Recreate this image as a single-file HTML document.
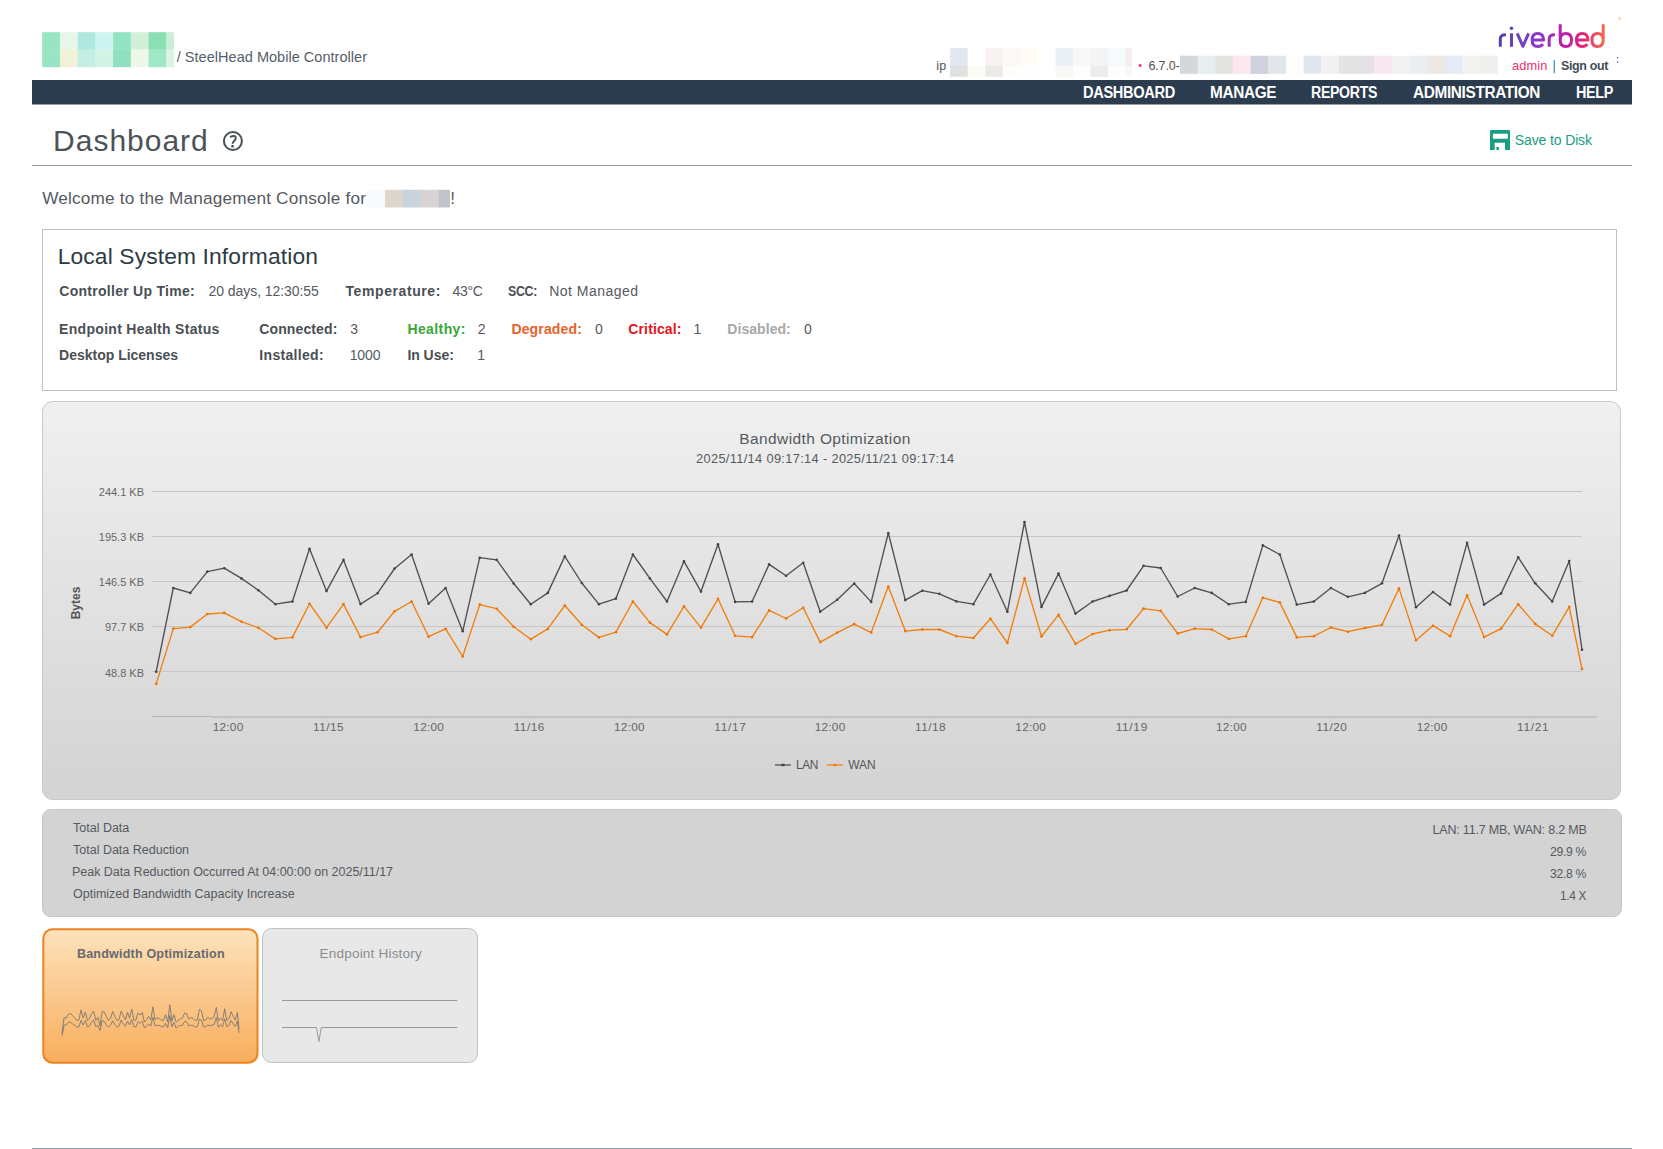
<!DOCTYPE html>
<html><head><meta charset="utf-8">
<style>
html,body{margin:0;padding:0;background:#fff;}
body{width:1663px;height:1149px;position:relative;overflow:hidden;font-family:"Liberation Sans",sans-serif;}
.t{position:absolute;white-space:nowrap;line-height:1;}
.abs{position:absolute;}
</style></head><body>
<svg class="abs" style="left:0;top:0" width="1663" height="1149" viewBox="0 0 1663 1149">
<rect x="42.20" y="32.20" width="18.02" height="17.65" fill="#98e4c4"/><rect x="59.92" y="32.20" width="18.02" height="17.65" fill="#e6f7ea"/><rect x="77.64" y="32.20" width="18.02" height="17.65" fill="#aee8de"/><rect x="95.36" y="32.20" width="18.02" height="17.65" fill="#cdf4f0"/><rect x="113.08" y="32.20" width="18.02" height="17.65" fill="#92e4c4"/><rect x="130.80" y="32.20" width="18.02" height="17.65" fill="#d2f0d8"/><rect x="148.52" y="32.20" width="18.02" height="17.65" fill="#8adfb4"/><rect x="166.24" y="32.20" width="7.76" height="17.65" fill="#c8eed8"/><rect x="42.20" y="49.55" width="18.02" height="17.65" fill="#98e4c4"/><rect x="59.92" y="49.55" width="18.02" height="17.65" fill="#f2f2d8"/><rect x="77.64" y="49.55" width="18.02" height="17.65" fill="#c2eee4"/><rect x="95.36" y="49.55" width="18.02" height="17.65" fill="#d2f4e4"/><rect x="113.08" y="49.55" width="18.02" height="17.65" fill="#8ee0c0"/><rect x="130.80" y="49.55" width="18.02" height="17.65" fill="#eef8e8"/><rect x="148.52" y="49.55" width="18.02" height="17.65" fill="#9ee8c8"/><rect x="166.24" y="49.55" width="7.76" height="17.65" fill="#daf4e0"/><rect x="165.9" y="32.2" width="8.1" height="34.7" fill="#fff" opacity="0"/><rect x="950.10" y="47.90" width="17.86" height="18.20" fill="#e2e8f0"/><rect x="967.66" y="47.90" width="17.86" height="18.20" fill="#ffffff"/><rect x="985.22" y="47.90" width="17.86" height="18.20" fill="#f8f2f0"/><rect x="1002.78" y="47.90" width="17.86" height="18.20" fill="#faf9f8"/><rect x="1020.34" y="47.90" width="17.86" height="18.20" fill="#fffbf5"/><rect x="1037.90" y="47.90" width="17.86" height="18.20" fill="#ffffff"/><rect x="1055.46" y="47.90" width="17.86" height="18.20" fill="#eaf0f5"/><rect x="1073.02" y="47.90" width="17.86" height="18.20" fill="#f8f8f8"/><rect x="1090.58" y="47.90" width="17.86" height="18.20" fill="#f6f4f3"/><rect x="1108.14" y="47.90" width="17.86" height="18.20" fill="#f6fafc"/><rect x="1125.70" y="47.90" width="6.30" height="18.20" fill="#f6eeee"/><rect x="950.10" y="65.80" width="17.86" height="11.00" fill="#e0e0df"/><rect x="967.66" y="65.80" width="17.86" height="11.00" fill="#fafcf6"/><rect x="985.22" y="65.80" width="17.86" height="11.00" fill="#eceae8"/><rect x="1002.78" y="65.80" width="17.86" height="11.00" fill="#fdfdfc"/><rect x="1020.34" y="65.80" width="17.86" height="11.00" fill="#fefefe"/><rect x="1037.90" y="65.80" width="17.86" height="11.00" fill="#ffffff"/><rect x="1055.46" y="65.80" width="17.86" height="11.00" fill="#f8f8f4"/><rect x="1073.02" y="65.80" width="17.86" height="11.00" fill="#fdfefe"/><rect x="1090.58" y="65.80" width="17.86" height="11.00" fill="#ececea"/><rect x="1108.14" y="65.80" width="17.86" height="11.00" fill="#fdfdfd"/><rect x="1125.70" y="65.80" width="6.30" height="11.00" fill="#f6faf2"/><rect x="1180.00" y="55.70" width="17.95" height="18.10" fill="#d5d8db"/><rect x="1197.65" y="55.70" width="17.95" height="18.10" fill="#e6eff0"/><rect x="1215.30" y="55.70" width="17.95" height="18.10" fill="#e4e4e2"/><rect x="1232.95" y="55.70" width="17.95" height="18.10" fill="#fde6ef"/><rect x="1250.60" y="55.70" width="17.95" height="18.10" fill="#cfd2dc"/><rect x="1268.25" y="55.70" width="17.95" height="18.10" fill="#e1e6ea"/><rect x="1285.90" y="55.70" width="17.95" height="18.10" fill="#fdfdfc"/><rect x="1303.55" y="55.70" width="17.95" height="18.10" fill="#dfe8f0"/><rect x="1321.20" y="55.70" width="17.95" height="18.10" fill="#f1f1ef"/><rect x="1338.85" y="55.70" width="17.95" height="18.10" fill="#e4e4e4"/><rect x="1356.50" y="55.70" width="17.95" height="18.10" fill="#e4e2e6"/><rect x="1374.15" y="55.70" width="17.95" height="18.10" fill="#f9e6ee"/><rect x="1391.80" y="55.70" width="17.95" height="18.10" fill="#f3f3f3"/><rect x="1409.45" y="55.70" width="17.95" height="18.10" fill="#e9eef2"/><rect x="1427.10" y="55.70" width="17.95" height="18.10" fill="#ece8e4"/><rect x="1444.75" y="55.70" width="17.95" height="18.10" fill="#e5ebf4"/><rect x="1462.40" y="55.70" width="17.95" height="18.10" fill="#f2f2ef"/><rect x="1480.05" y="55.70" width="17.65" height="18.10" fill="#efefed"/><rect x="367.30" y="189.80" width="18.10" height="17.70" fill="#f6fafd"/><rect x="385.10" y="189.80" width="18.10" height="17.70" fill="#ded6cc"/><rect x="402.90" y="189.80" width="18.10" height="17.70" fill="#c8d4dc"/><rect x="420.70" y="189.80" width="18.10" height="17.70" fill="#d8d4d4"/><rect x="438.50" y="189.80" width="11.50" height="17.70" fill="#c0c4c8"/>
<!-- pink dot -->
<rect x="1138.8" y="64.2" width="2.6" height="2.6" fill="#ec2f6c"/>
<!-- admin separator -->
<rect x="1553.6" y="60.2" width="1.3" height="13" fill="#4a90c0"/>
<!-- tiny marks -->
<circle cx="1619.6" cy="18.4" r="1" fill="none" stroke="#f4a070" stroke-width="0.7"/>
<rect x="1617" y="57" width="1.2" height="1.2" fill="#3060a0"/>
<rect x="1617" y="61.5" width="1.2" height="1.2" fill="#3060a0"/>
<!-- riverbed logo -->
<defs>
<linearGradient id="rb" x1="1497" y1="0" x2="1606" y2="0" gradientUnits="userSpaceOnUse">
<stop offset="0" stop-color="#5540b0"/>
<stop offset="0.35" stop-color="#8a3cc8"/>
<stop offset="0.6" stop-color="#b81eb0"/>
<stop offset="0.8" stop-color="#e02a78"/>
<stop offset="1" stop-color="#f4724a"/>
</linearGradient>
<linearGradient id="cg" x1="0" y1="401" x2="0" y2="800" gradientUnits="userSpaceOnUse">
<stop offset="0" stop-color="#f0f0f0"/>
<stop offset="1" stop-color="#d3d3d3"/>
</linearGradient>
<linearGradient id="og" x1="0" y1="928" x2="0" y2="1063" gradientUnits="userSpaceOnUse">
<stop offset="0" stop-color="#fde3bd"/>
<stop offset="1" stop-color="#f9ad5c"/>
</linearGradient>
</defs>
<g fill="none" stroke="url(#rb)" stroke-width="3" stroke-linecap="butt" stroke-linejoin="round">
<path d="M1500.3,46.8 V38.8 Q1500.3,34.6 1506,34.8"/>
<path d="M1511.5,33.3 V46.8"/>
<path d="M1517.2,33.3 L1522.9,46.3 L1528.6,33.3"/>
<path d="M1532.4,39.9 H1543.6 Q1543.4,33.5 1537.8,33.5 Q1532.1,33.5 1532.1,40.1 Q1532.1,46.6 1537.8,46.6 Q1541.2,46.6 1543,44.2"/>
<path d="M1549.2,46.8 V38.8 Q1549.2,34.6 1555,34.8"/>
<path d="M1560.2,24.2 V40.1 Q1560.2,33.5 1565.9,33.5 Q1571.5,33.5 1571.5,40.1 Q1571.5,46.6 1565.9,46.6 Q1560.2,46.6 1560.2,40.1"/>
<path d="M1576.8,39.9 H1588 Q1587.8,33.5 1582.2,33.5 Q1576.5,33.5 1576.5,40.1 Q1576.5,46.6 1582.2,46.6 Q1585.6,46.6 1587.4,44.2"/>
<path d="M1603.2,24.2 V40.1 Q1603.2,33.5 1597.6,33.5 Q1592,33.5 1592,40.1 Q1592,46.6 1597.6,46.6 Q1603.2,46.6 1603.2,40.1"/>
</g>
<circle cx="1511.5" cy="28.2" r="1.7" fill="#5a40b4"/>
<!-- nav bar -->
<rect x="32" y="80" width="1600" height="24.5" fill="#2c3c4f"/>
<!-- help icon -->
<circle cx="232.9" cy="141" r="9" fill="none" stroke="#465056" stroke-width="2"/>
<path d="M230.1,137.1 Q232,136.1 233.7,136 Q235.8,135.9 235.8,138.1 Q235.8,139.6 234.1,141 Q232.6,142.3 232.6,143.8" fill="none" stroke="#465056" stroke-width="1.9"/>
<rect x="231.3" y="145.1" width="2.5" height="2.4" rx="0.6" fill="#465056"/>
<!-- save icon -->
<path d="M1491,130 H1509 Q1510,130 1510,131 V150 H1505 V142.8 H1494.7 V150 H1490 V131 Q1490,130 1491,130 Z M1492.9,133.7 V138.8 H1507.8 V133.7 Z" fill="#1a9e82" fill-rule="evenodd"/>
<rect x="1496.4" y="147" width="2.5" height="3" fill="#1a9e82"/>
<!-- hr -->
<rect x="32" y="165" width="1600" height="1" fill="#8f9c9d"/>
<!-- local system box -->
<rect x="42.5" y="229.5" width="1574" height="161" fill="#fff" stroke="#bac2c6" stroke-width="1"/>
<!-- chart panel -->
<rect x="42.5" y="401.5" width="1578" height="398" rx="10" ry="10" fill="url(#cg)" stroke="#c9c9c9" stroke-width="1"/>
<!-- grid -->
<g stroke="#c6c6c6" stroke-width="1">
<line x1="152" y1="491.5" x2="1582" y2="491.5"/>
<line x1="152" y1="536.5" x2="1582" y2="536.5"/>
<line x1="152" y1="581.5" x2="1582" y2="581.5"/>
<line x1="152" y1="626.5" x2="1582" y2="626.5"/>
<line x1="152" y1="671.5" x2="1582" y2="671.5"/>
</g>
<line x1="152" y1="716.5" x2="212" y2="716.5" stroke="#b4b4b4" stroke-width="1"/>
<line x1="212" y1="717" x2="1597" y2="717" stroke="#acacac" stroke-width="1"/>
<g stroke="#c0d0e0" stroke-width="1">
<line x1="227.2" y1="717.5" x2="227.2" y2="722"/><line x1="327.5" y1="717.5" x2="327.5" y2="722"/><line x1="427.9" y1="717.5" x2="427.9" y2="722"/><line x1="528.2" y1="717.5" x2="528.2" y2="722"/><line x1="628.5" y1="717.5" x2="628.5" y2="722"/><line x1="728.8" y1="717.5" x2="728.8" y2="722"/><line x1="829.2" y1="717.5" x2="829.2" y2="722"/><line x1="929.5" y1="717.5" x2="929.5" y2="722"/><line x1="1029.8" y1="717.5" x2="1029.8" y2="722"/><line x1="1130.2" y1="717.5" x2="1130.2" y2="722"/><line x1="1230.5" y1="717.5" x2="1230.5" y2="722"/><line x1="1330.8" y1="717.5" x2="1330.8" y2="722"/><line x1="1431.2" y1="717.5" x2="1431.2" y2="722"/><line x1="1531.5" y1="717.5" x2="1531.5" y2="722"/>
</g>
<polyline points="156.2,671.7 173.3,588.0 190.3,592.9 207.3,571.6 224.3,568.2 241.4,578.4 258.4,590.2 275.4,604.2 292.4,601.5 309.5,548.7 326.5,591.1 343.5,559.9 360.5,604.1 377.6,593.2 394.6,568.5 411.6,554.5 428.6,603.7 445.6,588.0 462.7,631.3 479.7,557.7 496.7,559.9 513.7,583.5 530.8,604.2 547.8,592.9 564.8,556.4 581.8,583.0 598.9,604.2 615.9,598.6 632.9,554.5 649.9,578.4 667.0,601.5 684.0,561.3 701.0,591.6 718.0,544.2 735.1,601.9 752.1,601.5 769.1,564.4 786.1,575.7 803.2,562.8 820.2,611.8 837.2,599.7 854.2,583.5 871.2,601.9 888.3,533.0 905.3,600.1 922.3,590.7 939.3,593.8 956.4,601.4 973.4,604.2 990.4,574.5 1007.4,611.8 1024.5,522.0 1041.5,606.9 1058.5,573.6 1075.5,613.6 1092.6,601.5 1109.6,595.9 1126.6,590.5 1143.6,565.8 1160.7,568.0 1177.7,596.5 1194.7,588.0 1211.7,592.9 1228.8,604.2 1245.8,601.9 1262.8,545.4 1279.8,554.5 1296.8,604.6 1313.9,601.5 1330.9,588.0 1347.9,596.8 1364.9,592.9 1382.0,583.3 1399.0,535.5 1416.0,607.3 1433.0,592.0 1450.1,604.6 1467.1,542.7 1484.1,604.6 1501.1,593.4 1518.2,557.3 1535.2,583.3 1552.2,601.5 1569.2,561.0 1582.0,649.7" fill="none" stroke="#505050" stroke-width="1.35" stroke-linejoin="round"/>
<g fill="#444"><circle cx="156.2" cy="671.7" r="1.3"/><circle cx="173.3" cy="588.0" r="1.3"/><circle cx="190.3" cy="592.9" r="1.3"/><circle cx="207.3" cy="571.6" r="1.3"/><circle cx="224.3" cy="568.2" r="1.3"/><circle cx="241.4" cy="578.4" r="1.3"/><circle cx="258.4" cy="590.2" r="1.3"/><circle cx="275.4" cy="604.2" r="1.3"/><circle cx="292.4" cy="601.5" r="1.3"/><circle cx="309.5" cy="548.7" r="1.3"/><circle cx="326.5" cy="591.1" r="1.3"/><circle cx="343.5" cy="559.9" r="1.3"/><circle cx="360.5" cy="604.1" r="1.3"/><circle cx="377.6" cy="593.2" r="1.3"/><circle cx="394.6" cy="568.5" r="1.3"/><circle cx="411.6" cy="554.5" r="1.3"/><circle cx="428.6" cy="603.7" r="1.3"/><circle cx="445.6" cy="588.0" r="1.3"/><circle cx="462.7" cy="631.3" r="1.3"/><circle cx="479.7" cy="557.7" r="1.3"/><circle cx="496.7" cy="559.9" r="1.3"/><circle cx="513.7" cy="583.5" r="1.3"/><circle cx="530.8" cy="604.2" r="1.3"/><circle cx="547.8" cy="592.9" r="1.3"/><circle cx="564.8" cy="556.4" r="1.3"/><circle cx="581.8" cy="583.0" r="1.3"/><circle cx="598.9" cy="604.2" r="1.3"/><circle cx="615.9" cy="598.6" r="1.3"/><circle cx="632.9" cy="554.5" r="1.3"/><circle cx="649.9" cy="578.4" r="1.3"/><circle cx="667.0" cy="601.5" r="1.3"/><circle cx="684.0" cy="561.3" r="1.3"/><circle cx="701.0" cy="591.6" r="1.3"/><circle cx="718.0" cy="544.2" r="1.3"/><circle cx="735.1" cy="601.9" r="1.3"/><circle cx="752.1" cy="601.5" r="1.3"/><circle cx="769.1" cy="564.4" r="1.3"/><circle cx="786.1" cy="575.7" r="1.3"/><circle cx="803.2" cy="562.8" r="1.3"/><circle cx="820.2" cy="611.8" r="1.3"/><circle cx="837.2" cy="599.7" r="1.3"/><circle cx="854.2" cy="583.5" r="1.3"/><circle cx="871.2" cy="601.9" r="1.3"/><circle cx="888.3" cy="533.0" r="1.3"/><circle cx="905.3" cy="600.1" r="1.3"/><circle cx="922.3" cy="590.7" r="1.3"/><circle cx="939.3" cy="593.8" r="1.3"/><circle cx="956.4" cy="601.4" r="1.3"/><circle cx="973.4" cy="604.2" r="1.3"/><circle cx="990.4" cy="574.5" r="1.3"/><circle cx="1007.4" cy="611.8" r="1.3"/><circle cx="1024.5" cy="522.0" r="1.3"/><circle cx="1041.5" cy="606.9" r="1.3"/><circle cx="1058.5" cy="573.6" r="1.3"/><circle cx="1075.5" cy="613.6" r="1.3"/><circle cx="1092.6" cy="601.5" r="1.3"/><circle cx="1109.6" cy="595.9" r="1.3"/><circle cx="1126.6" cy="590.5" r="1.3"/><circle cx="1143.6" cy="565.8" r="1.3"/><circle cx="1160.7" cy="568.0" r="1.3"/><circle cx="1177.7" cy="596.5" r="1.3"/><circle cx="1194.7" cy="588.0" r="1.3"/><circle cx="1211.7" cy="592.9" r="1.3"/><circle cx="1228.8" cy="604.2" r="1.3"/><circle cx="1245.8" cy="601.9" r="1.3"/><circle cx="1262.8" cy="545.4" r="1.3"/><circle cx="1279.8" cy="554.5" r="1.3"/><circle cx="1296.8" cy="604.6" r="1.3"/><circle cx="1313.9" cy="601.5" r="1.3"/><circle cx="1330.9" cy="588.0" r="1.3"/><circle cx="1347.9" cy="596.8" r="1.3"/><circle cx="1364.9" cy="592.9" r="1.3"/><circle cx="1382.0" cy="583.3" r="1.3"/><circle cx="1399.0" cy="535.5" r="1.3"/><circle cx="1416.0" cy="607.3" r="1.3"/><circle cx="1433.0" cy="592.0" r="1.3"/><circle cx="1450.1" cy="604.6" r="1.3"/><circle cx="1467.1" cy="542.7" r="1.3"/><circle cx="1484.1" cy="604.6" r="1.3"/><circle cx="1501.1" cy="593.4" r="1.3"/><circle cx="1518.2" cy="557.3" r="1.3"/><circle cx="1535.2" cy="583.3" r="1.3"/><circle cx="1552.2" cy="601.5" r="1.3"/><circle cx="1569.2" cy="561.0" r="1.3"/><circle cx="1582.0" cy="649.7" r="1.3"/></g>
<polyline points="156.2,683.9 173.3,628.6 190.3,627.1 207.3,614.0 224.3,612.9 241.4,621.7 258.4,627.7 275.4,638.9 292.4,637.4 309.5,603.7 326.5,627.7 343.5,604.1 360.5,637.1 377.6,632.2 394.6,611.3 411.6,601.5 428.6,636.7 445.6,628.9 462.7,656.5 479.7,604.6 496.7,608.7 513.7,626.8 530.8,639.2 547.8,628.9 564.8,605.5 581.8,624.8 598.9,637.4 615.9,632.2 632.9,601.5 649.9,622.6 667.0,634.4 684.0,606.4 701.0,627.7 718.0,598.8 735.1,635.8 752.1,637.1 769.1,610.4 786.1,618.5 803.2,607.8 820.2,642.1 837.2,632.6 854.2,624.1 871.2,632.6 888.3,586.6 905.3,631.1 922.3,629.5 939.3,629.5 956.4,636.2 973.4,638.0 990.4,618.7 1007.4,643.0 1024.5,578.4 1041.5,636.5 1058.5,614.9 1075.5,643.9 1092.6,634.0 1109.6,630.2 1126.6,629.3 1143.6,608.6 1160.7,610.9 1177.7,633.5 1194.7,628.6 1211.7,629.5 1228.8,638.9 1245.8,636.2 1262.8,597.7 1279.8,602.4 1296.8,637.4 1313.9,636.2 1330.9,627.5 1347.9,631.7 1364.9,628.0 1382.0,624.8 1399.0,588.4 1416.0,640.3 1433.0,625.7 1450.1,636.2 1467.1,595.2 1484.1,637.1 1501.1,628.6 1518.2,604.2 1535.2,623.9 1552.2,635.8 1569.2,606.8 1582.0,669.0" fill="none" stroke="#f27f0c" stroke-width="1.35" stroke-linejoin="round"/>
<g fill="#f07000"><circle cx="156.2" cy="683.9" r="1.3"/><circle cx="173.3" cy="628.6" r="1.3"/><circle cx="190.3" cy="627.1" r="1.3"/><circle cx="207.3" cy="614.0" r="1.3"/><circle cx="224.3" cy="612.9" r="1.3"/><circle cx="241.4" cy="621.7" r="1.3"/><circle cx="258.4" cy="627.7" r="1.3"/><circle cx="275.4" cy="638.9" r="1.3"/><circle cx="292.4" cy="637.4" r="1.3"/><circle cx="309.5" cy="603.7" r="1.3"/><circle cx="326.5" cy="627.7" r="1.3"/><circle cx="343.5" cy="604.1" r="1.3"/><circle cx="360.5" cy="637.1" r="1.3"/><circle cx="377.6" cy="632.2" r="1.3"/><circle cx="394.6" cy="611.3" r="1.3"/><circle cx="411.6" cy="601.5" r="1.3"/><circle cx="428.6" cy="636.7" r="1.3"/><circle cx="445.6" cy="628.9" r="1.3"/><circle cx="462.7" cy="656.5" r="1.3"/><circle cx="479.7" cy="604.6" r="1.3"/><circle cx="496.7" cy="608.7" r="1.3"/><circle cx="513.7" cy="626.8" r="1.3"/><circle cx="530.8" cy="639.2" r="1.3"/><circle cx="547.8" cy="628.9" r="1.3"/><circle cx="564.8" cy="605.5" r="1.3"/><circle cx="581.8" cy="624.8" r="1.3"/><circle cx="598.9" cy="637.4" r="1.3"/><circle cx="615.9" cy="632.2" r="1.3"/><circle cx="632.9" cy="601.5" r="1.3"/><circle cx="649.9" cy="622.6" r="1.3"/><circle cx="667.0" cy="634.4" r="1.3"/><circle cx="684.0" cy="606.4" r="1.3"/><circle cx="701.0" cy="627.7" r="1.3"/><circle cx="718.0" cy="598.8" r="1.3"/><circle cx="735.1" cy="635.8" r="1.3"/><circle cx="752.1" cy="637.1" r="1.3"/><circle cx="769.1" cy="610.4" r="1.3"/><circle cx="786.1" cy="618.5" r="1.3"/><circle cx="803.2" cy="607.8" r="1.3"/><circle cx="820.2" cy="642.1" r="1.3"/><circle cx="837.2" cy="632.6" r="1.3"/><circle cx="854.2" cy="624.1" r="1.3"/><circle cx="871.2" cy="632.6" r="1.3"/><circle cx="888.3" cy="586.6" r="1.3"/><circle cx="905.3" cy="631.1" r="1.3"/><circle cx="922.3" cy="629.5" r="1.3"/><circle cx="939.3" cy="629.5" r="1.3"/><circle cx="956.4" cy="636.2" r="1.3"/><circle cx="973.4" cy="638.0" r="1.3"/><circle cx="990.4" cy="618.7" r="1.3"/><circle cx="1007.4" cy="643.0" r="1.3"/><circle cx="1024.5" cy="578.4" r="1.3"/><circle cx="1041.5" cy="636.5" r="1.3"/><circle cx="1058.5" cy="614.9" r="1.3"/><circle cx="1075.5" cy="643.9" r="1.3"/><circle cx="1092.6" cy="634.0" r="1.3"/><circle cx="1109.6" cy="630.2" r="1.3"/><circle cx="1126.6" cy="629.3" r="1.3"/><circle cx="1143.6" cy="608.6" r="1.3"/><circle cx="1160.7" cy="610.9" r="1.3"/><circle cx="1177.7" cy="633.5" r="1.3"/><circle cx="1194.7" cy="628.6" r="1.3"/><circle cx="1211.7" cy="629.5" r="1.3"/><circle cx="1228.8" cy="638.9" r="1.3"/><circle cx="1245.8" cy="636.2" r="1.3"/><circle cx="1262.8" cy="597.7" r="1.3"/><circle cx="1279.8" cy="602.4" r="1.3"/><circle cx="1296.8" cy="637.4" r="1.3"/><circle cx="1313.9" cy="636.2" r="1.3"/><circle cx="1330.9" cy="627.5" r="1.3"/><circle cx="1347.9" cy="631.7" r="1.3"/><circle cx="1364.9" cy="628.0" r="1.3"/><circle cx="1382.0" cy="624.8" r="1.3"/><circle cx="1399.0" cy="588.4" r="1.3"/><circle cx="1416.0" cy="640.3" r="1.3"/><circle cx="1433.0" cy="625.7" r="1.3"/><circle cx="1450.1" cy="636.2" r="1.3"/><circle cx="1467.1" cy="595.2" r="1.3"/><circle cx="1484.1" cy="637.1" r="1.3"/><circle cx="1501.1" cy="628.6" r="1.3"/><circle cx="1518.2" cy="604.2" r="1.3"/><circle cx="1535.2" cy="623.9" r="1.3"/><circle cx="1552.2" cy="635.8" r="1.3"/><circle cx="1569.2" cy="606.8" r="1.3"/><circle cx="1582.0" cy="669.0" r="1.3"/></g>
<!-- bytes label -->
<text x="0" y="0" transform="translate(80.2,603) rotate(-90)" text-anchor="middle" font-family="Liberation Sans" font-weight="bold" font-size="12" fill="#555">Bytes</text>
<!-- legend -->
<line x1="775" y1="765" x2="791" y2="765" stroke="#6a6a6a" stroke-width="1.6"/>
<rect x="781.5" y="763.8" width="3" height="2.4" fill="#404040"/>
<line x1="827" y1="765" x2="843" y2="765" stroke="#f29030" stroke-width="1.6"/>
<rect x="833.5" y="763.8" width="3" height="2.4" fill="#f27f0c"/>
<!-- stats panel -->
<rect x="42.5" y="809.5" width="1579" height="107" rx="8" ry="8" fill="#d3d3d3" stroke="#c6c6c6" stroke-width="1"/>
<!-- thumb 1 -->
<rect x="43.3" y="929.3" width="214.2" height="133.4" rx="9" ry="9" fill="url(#og)" stroke="#ef8220" stroke-width="2"/>
<polyline points="62.0,1033.4 64.1,1017.4 66.2,1018.4 68.3,1014.3 70.5,1013.6 72.6,1015.6 74.7,1017.8 76.8,1020.5 78.9,1020.0 81.0,1009.9 83.1,1018.0 85.3,1012.0 87.4,1020.5 89.5,1018.4 91.6,1013.7 93.7,1011.0 95.8,1020.4 97.9,1017.4 100.0,1025.7 102.2,1011.6 104.3,1012.0 106.4,1016.6 108.5,1020.5 110.6,1018.4 112.7,1011.4 114.8,1016.5 117.0,1020.5 119.1,1019.5 121.2,1011.0 123.3,1015.6 125.4,1020.0 127.5,1012.3 129.6,1018.1 131.7,1009.0 133.9,1020.1 136.0,1020.0 138.1,1012.9 140.2,1015.1 142.3,1012.6 144.4,1022.0 146.5,1019.7 148.7,1016.6 150.8,1020.1 152.9,1006.9 155.0,1019.7 157.1,1017.9 159.2,1018.5 161.3,1020.0 163.4,1020.5 165.6,1014.8 167.7,1022.0 169.8,1004.8 171.9,1021.1 174.0,1014.7 176.1,1022.3 178.2,1020.0 180.4,1018.9 182.5,1017.9 184.6,1013.2 186.7,1013.6 188.8,1019.1 190.9,1017.4 193.0,1018.4 195.1,1020.5 197.3,1020.1 199.4,1009.3 201.5,1011.0 203.6,1020.6 205.7,1020.0 207.8,1017.4 209.9,1019.1 212.1,1018.4 214.2,1016.5 216.3,1007.4 218.4,1021.1 220.5,1018.2 222.6,1020.6 224.7,1008.8 226.8,1020.6 229.0,1018.5 231.1,1011.6 233.2,1016.5 235.3,1020.0 237.4,1012.3 239.0,1029.2" fill="none" stroke="#707478" stroke-width="0.85"/>
<polyline points="62.0,1035.8 64.1,1025.2 66.2,1024.9 68.3,1022.4 70.5,1022.2 72.6,1023.9 74.7,1025.0 76.8,1027.2 78.9,1026.9 81.0,1020.4 83.1,1025.0 85.3,1020.5 87.4,1026.8 89.5,1025.9 91.6,1021.9 93.7,1020.0 95.8,1026.7 97.9,1025.3 100.0,1030.5 102.2,1020.6 104.3,1021.4 106.4,1024.9 108.5,1027.2 110.6,1025.3 112.7,1020.8 114.8,1024.5 117.0,1026.9 119.1,1025.9 121.2,1020.0 123.3,1024.1 125.4,1026.3 127.5,1021.0 129.6,1025.0 131.7,1019.5 133.9,1026.6 136.0,1026.8 138.1,1021.7 140.2,1023.3 142.3,1021.2 144.4,1027.8 146.5,1026.0 148.7,1024.3 150.8,1026.0 152.9,1017.2 155.0,1025.7 157.1,1025.4 159.2,1025.4 161.3,1026.6 163.4,1027.0 165.6,1023.3 167.7,1028.0 169.8,1015.6 171.9,1026.7 174.0,1022.6 176.1,1028.1 178.2,1026.2 180.4,1025.5 182.5,1025.3 184.6,1021.4 186.7,1021.8 188.8,1026.1 190.9,1025.2 193.0,1025.4 195.1,1027.2 197.3,1026.6 199.4,1019.3 201.5,1020.2 203.6,1026.9 205.7,1026.6 207.8,1025.0 209.9,1025.8 212.1,1025.1 214.2,1024.5 216.3,1017.5 218.4,1027.4 220.5,1024.6 222.6,1026.6 224.7,1018.8 226.8,1026.8 229.0,1025.2 231.1,1020.5 233.2,1024.3 235.3,1026.6 237.4,1021.0 239.0,1032.9" fill="none" stroke="#707478" stroke-width="0.85"/>
<!-- thumb 2 -->
<rect x="262.5" y="928.5" width="215" height="134" rx="9" ry="9" fill="#e8e8e8" stroke="#c0c0c0" stroke-width="1"/>
<line x1="282" y1="1000.5" x2="457.4" y2="1000.5" stroke="#999" stroke-width="1"/>
<polyline points="282,1027.5 316.5,1027.5 318.9,1041.5 321.3,1027.5 457.4,1027.5" fill="none" stroke="#999" stroke-width="1"/>
<!-- footer line -->
<rect x="32" y="1148" width="1600" height="1" fill="#8e9a9c"/>
</svg>
<div class="t" style="left:176.70px;top:50.13px;font-size:14.50px;font-weight:normal;color:#55606a;letter-spacing:0.033px;">/ SteelHead Mobile Controller</div>
<div class="t" style="left:936.20px;top:59.62px;font-size:12.50px;font-weight:normal;color:#555;letter-spacing:0.223px;">ip</div>
<div class="t" style="left:1148.50px;top:59.62px;font-size:12.50px;font-weight:normal;color:#555;letter-spacing:-0.160px;">6.7.0-</div>
<div class="t" style="left:1512.00px;top:59.56px;font-size:12.80px;font-weight:normal;color:#e8336e;letter-spacing:0.116px;">admin</div>
<div class="t" style="left:1560.70px;top:59.82px;font-size:12.50px;font-weight:bold;color:#444d56;letter-spacing:-0.350px;transform:scaleX(0.9964);transform-origin:0 0;">Sign out</div>
<div class="t" style="left:1082.98px;top:84.83px;font-size:15.80px;font-weight:bold;color:#ffffff;letter-spacing:-0.350px;transform:scaleX(0.9241);transform-origin:0 0;">DASHBOARD</div>
<div class="t" style="left:1210.03px;top:84.83px;font-size:15.80px;font-weight:bold;color:#ffffff;letter-spacing:-0.350px;transform:scaleX(0.9713);transform-origin:0 0;">MANAGE</div>
<div class="t" style="left:1311.11px;top:84.83px;font-size:15.80px;font-weight:bold;color:#ffffff;letter-spacing:-0.350px;transform:scaleX(0.8938);transform-origin:0 0;">REPORTS</div>
<div class="t" style="left:1413.00px;top:84.83px;font-size:15.80px;font-weight:bold;color:#ffffff;letter-spacing:-0.350px;transform:scaleX(0.9712);transform-origin:0 0;">ADMINISTRATION</div>
<div class="t" style="left:1576.09px;top:84.83px;font-size:15.80px;font-weight:bold;color:#ffffff;letter-spacing:-0.350px;transform:scaleX(0.9104);transform-origin:0 0;">HELP</div>
<div class="t" style="left:53.10px;top:125.60px;font-size:30.00px;font-weight:normal;color:#4b5358;letter-spacing:0.990px;">Dashboard</div>
<div class="t" style="left:1514.80px;top:133.15px;font-size:14.00px;font-weight:normal;color:#1a9e82;letter-spacing:-0.126px;">Save to Disk</div>
<div class="t" style="left:42.20px;top:189.74px;font-size:17.20px;font-weight:normal;color:#555a5f;letter-spacing:0.191px;">Welcome to the Management Console for</div>
<div class="t" style="left:450.30px;top:189.74px;font-size:17.20px;font-weight:normal;color:#555a5f;letter-spacing:0.000px;">!</div>
<div class="t" style="left:57.70px;top:244.50px;font-size:22.80px;font-weight:normal;color:#2d3a45;letter-spacing:0.133px;">Local System Information</div>
<div class="t" style="left:59.30px;top:283.55px;font-size:14.00px;font-weight:bold;color:#4a4f55;letter-spacing:0.275px;">Controller Up Time:</div>
<div class="t" style="left:208.50px;top:283.55px;font-size:14.00px;font-weight:normal;color:#555a5f;letter-spacing:-0.058px;">20 days, 12:30:55</div>
<div class="t" style="left:345.50px;top:283.55px;font-size:14.00px;font-weight:bold;color:#4a4f55;letter-spacing:0.585px;">Temperature:</div>
<div class="t" style="left:452.60px;top:283.55px;font-size:14.00px;font-weight:normal;color:#555a5f;letter-spacing:-0.324px;">43°C</div>
<div class="t" style="left:507.60px;top:283.55px;font-size:14.00px;font-weight:bold;color:#4a4f55;letter-spacing:-0.350px;transform:scaleX(0.8859);transform-origin:0 0;">SCC:</div>
<div class="t" style="left:549.30px;top:283.55px;font-size:14.00px;font-weight:normal;color:#555a5f;letter-spacing:0.463px;">Not Managed</div>
<div class="t" style="left:59.10px;top:321.95px;font-size:14.00px;font-weight:bold;color:#4a4f55;letter-spacing:0.299px;">Endpoint Health Status</div>
<div class="t" style="left:259.30px;top:321.95px;font-size:14.00px;font-weight:bold;color:#4a4f55;letter-spacing:0.118px;">Connected:</div>
<div class="t" style="left:350.20px;top:321.95px;font-size:14.00px;font-weight:normal;color:#555a5f;letter-spacing:0.000px;">3</div>
<div class="t" style="left:407.40px;top:321.95px;font-size:14.00px;font-weight:bold;color:#3aa63a;letter-spacing:0.404px;">Healthy:</div>
<div class="t" style="left:477.80px;top:321.95px;font-size:14.00px;font-weight:normal;color:#555a5f;letter-spacing:0.000px;">2</div>
<div class="t" style="left:511.40px;top:321.95px;font-size:14.00px;font-weight:bold;color:#e5632a;letter-spacing:0.153px;">Degraded:</div>
<div class="t" style="left:594.90px;top:321.95px;font-size:14.00px;font-weight:normal;color:#555a5f;letter-spacing:0.000px;">0</div>
<div class="t" style="left:628.30px;top:321.95px;font-size:14.00px;font-weight:bold;color:#e3141c;letter-spacing:0.130px;">Critical:</div>
<div class="t" style="left:693.50px;top:321.95px;font-size:14.00px;font-weight:normal;color:#555a5f;letter-spacing:0.000px;">1</div>
<div class="t" style="left:727.30px;top:321.95px;font-size:14.00px;font-weight:bold;color:#a8a8a8;letter-spacing:0.056px;">Disabled:</div>
<div class="t" style="left:804.00px;top:321.95px;font-size:14.00px;font-weight:normal;color:#555a5f;letter-spacing:0.000px;">0</div>
<div class="t" style="left:59.10px;top:348.15px;font-size:14.00px;font-weight:bold;color:#4a4f55;letter-spacing:-0.011px;">Desktop Licenses</div>
<div class="t" style="left:259.30px;top:348.15px;font-size:14.00px;font-weight:bold;color:#4a4f55;letter-spacing:0.323px;">Installed:</div>
<div class="t" style="left:349.70px;top:348.15px;font-size:14.00px;font-weight:normal;color:#555a5f;letter-spacing:-0.119px;">1000</div>
<div class="t" style="left:407.40px;top:348.15px;font-size:14.00px;font-weight:bold;color:#4a4f55;letter-spacing:-0.036px;">In Use:</div>
<div class="t" style="left:477.30px;top:348.15px;font-size:14.00px;font-weight:normal;color:#555a5f;letter-spacing:0.000px;">1</div>
<div class="t" style="left:739.35px;top:431.38px;font-size:15.50px;font-weight:normal;color:#555a5f;letter-spacing:0.385px;">Bandwidth Optimization</div>
<div class="t" style="left:696.00px;top:453.46px;font-size:12.80px;font-weight:normal;color:#555a5f;letter-spacing:0.345px;">2025/11/14 09:17:14 - 2025/11/21 09:17:14</div>
<div class="t" style="left:98.78px;top:487.19px;font-size:11.00px;font-weight:normal;color:#666;letter-spacing:0.000px;">244.1 KB</div>
<div class="t" style="left:98.78px;top:532.29px;font-size:11.00px;font-weight:normal;color:#666;letter-spacing:0.000px;">195.3 KB</div>
<div class="t" style="left:98.78px;top:577.39px;font-size:11.00px;font-weight:normal;color:#666;letter-spacing:0.000px;">146.5 KB</div>
<div class="t" style="left:104.90px;top:622.49px;font-size:11.00px;font-weight:normal;color:#666;letter-spacing:0.000px;">97.7 KB</div>
<div class="t" style="left:104.90px;top:667.59px;font-size:11.00px;font-weight:normal;color:#666;letter-spacing:0.000px;">48.8 KB</div>
<div class="t" style="left:212.70px;top:722.01px;font-size:11.80px;font-weight:normal;color:#666;letter-spacing:0.260px;">12:00</div>
<div class="t" style="left:313.03px;top:722.01px;font-size:11.80px;font-weight:normal;color:#666;letter-spacing:0.479px;">11/15</div>
<div class="t" style="left:413.36px;top:722.01px;font-size:11.80px;font-weight:normal;color:#666;letter-spacing:0.260px;">12:00</div>
<div class="t" style="left:513.69px;top:722.01px;font-size:11.80px;font-weight:normal;color:#666;letter-spacing:0.479px;">11/16</div>
<div class="t" style="left:614.02px;top:722.01px;font-size:11.80px;font-weight:normal;color:#666;letter-spacing:0.260px;">12:00</div>
<div class="t" style="left:714.35px;top:722.01px;font-size:11.80px;font-weight:normal;color:#666;letter-spacing:0.729px;">11/17</div>
<div class="t" style="left:814.68px;top:722.01px;font-size:11.80px;font-weight:normal;color:#666;letter-spacing:0.260px;">12:00</div>
<div class="t" style="left:915.01px;top:722.01px;font-size:11.80px;font-weight:normal;color:#666;letter-spacing:0.479px;">11/18</div>
<div class="t" style="left:1015.34px;top:722.01px;font-size:11.80px;font-weight:normal;color:#666;letter-spacing:0.260px;">12:00</div>
<div class="t" style="left:1115.67px;top:722.01px;font-size:11.80px;font-weight:normal;color:#666;letter-spacing:0.729px;">11/19</div>
<div class="t" style="left:1216.00px;top:722.01px;font-size:11.80px;font-weight:normal;color:#666;letter-spacing:0.260px;">12:00</div>
<div class="t" style="left:1316.33px;top:722.01px;font-size:11.80px;font-weight:normal;color:#666;letter-spacing:0.479px;">11/20</div>
<div class="t" style="left:1416.66px;top:722.01px;font-size:11.80px;font-weight:normal;color:#666;letter-spacing:0.260px;">12:00</div>
<div class="t" style="left:1516.99px;top:722.01px;font-size:11.80px;font-weight:normal;color:#666;letter-spacing:0.729px;">11/21</div>
<div class="t" style="left:796.30px;top:758.84px;font-size:12.00px;font-weight:normal;color:#555;letter-spacing:-0.350px;transform:scaleX(0.9919);transform-origin:0 0;">LAN</div>
<div class="t" style="left:848.20px;top:758.84px;font-size:12.00px;font-weight:normal;color:#555;letter-spacing:-0.042px;">WAN</div>
<div class="t" style="left:73.00px;top:821.82px;font-size:12.50px;font-weight:normal;color:#555a5f;letter-spacing:0.000px;">Total Data</div>
<div class="t" style="left:73.00px;top:843.82px;font-size:12.50px;font-weight:normal;color:#555a5f;letter-spacing:0.000px;">Total Data Reduction</div>
<div class="t" style="left:72.00px;top:865.82px;font-size:12.50px;font-weight:normal;color:#555a5f;letter-spacing:-0.022px;">Peak Data Reduction Occurred At 04:00:00 on 2025/11/17</div>
<div class="t" style="left:73.00px;top:887.82px;font-size:12.50px;font-weight:normal;color:#555a5f;letter-spacing:0.000px;">Optimized Bandwidth Capacity Increase</div>
<div class="t" style="left:1432.60px;top:823.82px;font-size:12.50px;font-weight:normal;color:#555a5f;letter-spacing:-0.206px;">LAN: 11.7 MB, WAN: 8.2 MB</div>
<div class="t" style="left:1550.20px;top:845.82px;font-size:12.50px;font-weight:normal;color:#555a5f;letter-spacing:-0.350px;transform:scaleX(0.9770);transform-origin:0 0;">29.9 %</div>
<div class="t" style="left:1550.20px;top:867.82px;font-size:12.50px;font-weight:normal;color:#555a5f;letter-spacing:-0.350px;transform:scaleX(0.9770);transform-origin:0 0;">32.8 %</div>
<div class="t" style="left:1559.50px;top:889.82px;font-size:12.50px;font-weight:normal;color:#555a5f;letter-spacing:-0.350px;transform:scaleX(0.9455);transform-origin:0 0;">1.4 X</div>
<div class="t" style="left:76.90px;top:947.62px;font-size:12.50px;font-weight:bold;color:#666a6e;letter-spacing:0.219px;">Bandwidth Optimization</div>
<div class="t" style="left:319.60px;top:946.77px;font-size:13.50px;font-weight:normal;color:#888c90;letter-spacing:0.207px;">Endpoint History</div>
</body></html>
